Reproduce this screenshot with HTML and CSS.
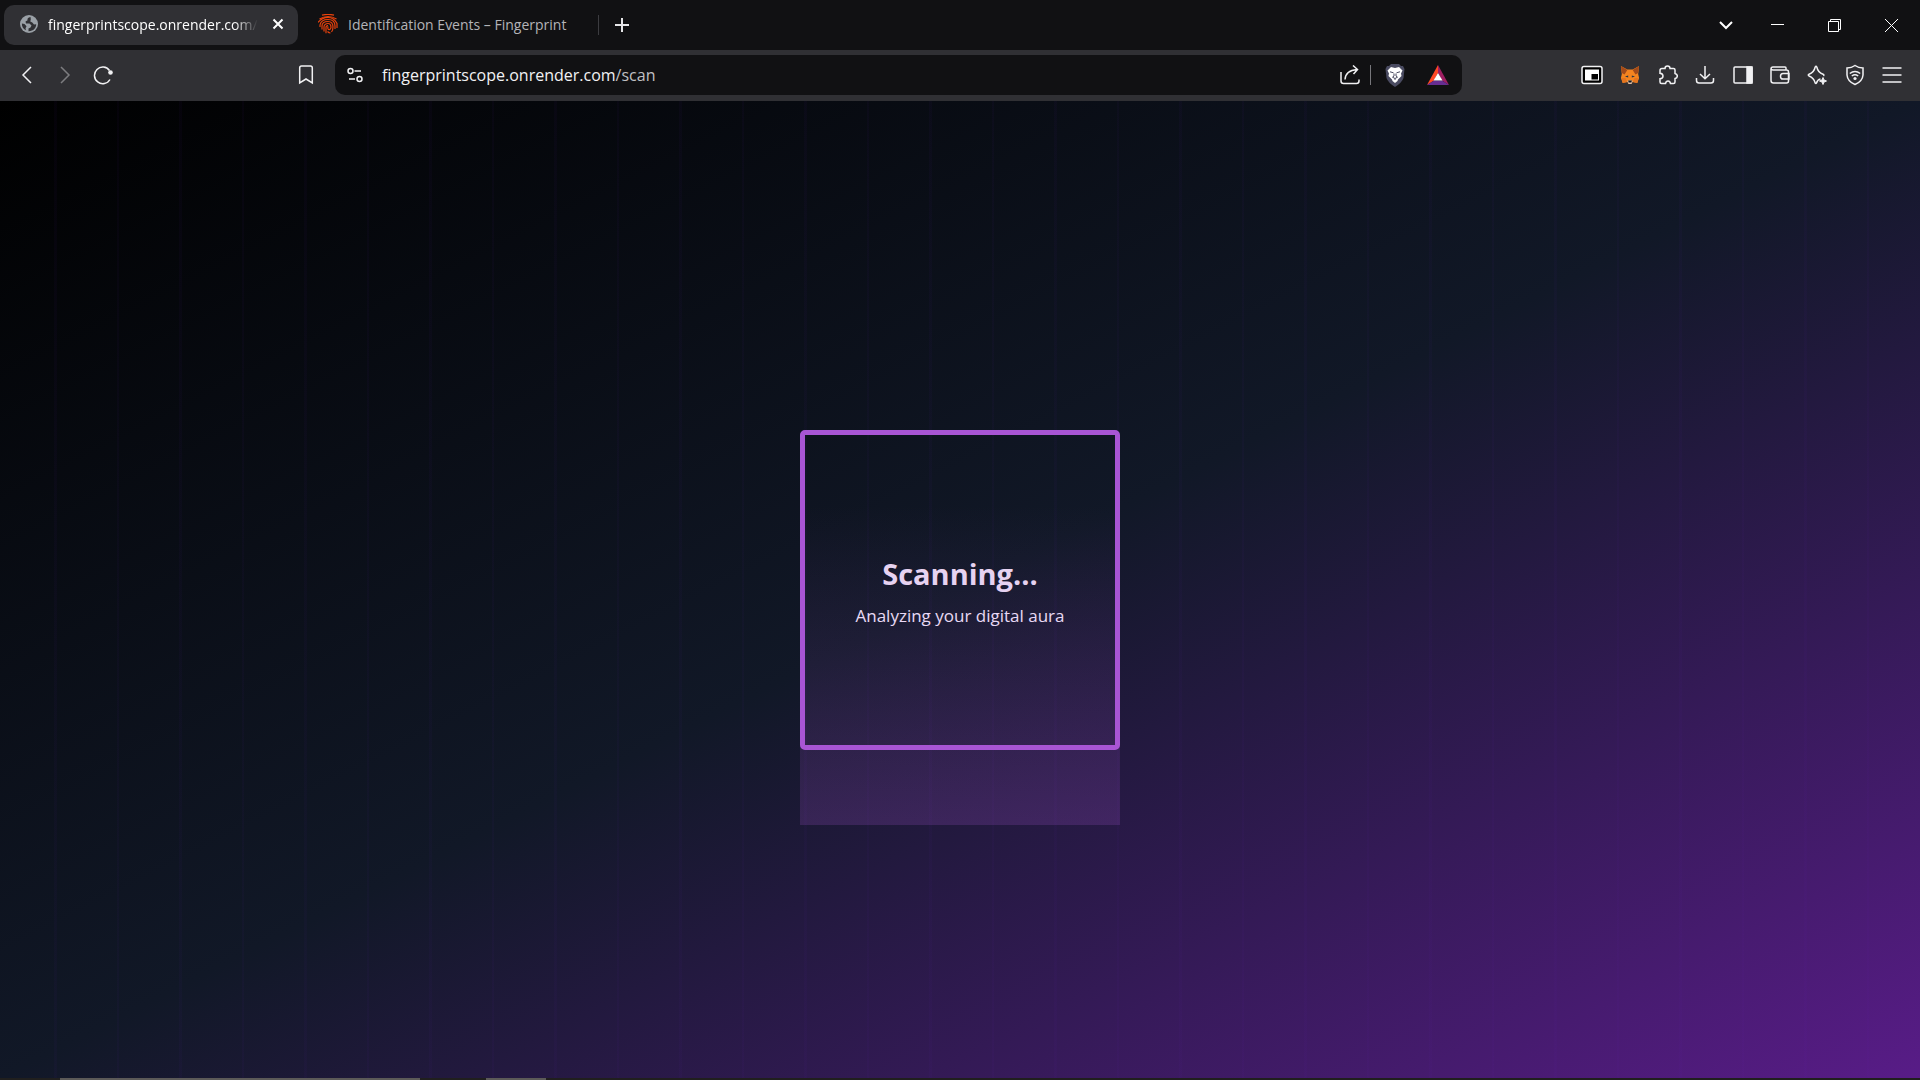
FILE: index.html
```
<!DOCTYPE html>
<html lang="en">

<head>
  <meta charset="UTF-8">
  <meta name="viewport" content="width=device-width, initial-scale=1.0">
  <title>Scan</title>
  <link rel="stylesheet" href="styles.css">
</head>

<body>
  <!-- tabs -->
  <header class="tabs">
    <div class="tab active">
      <svg width="18" height="18" viewBox="0 0 18 18">
        <circle cx="9" cy="9" r="9" fill="#9aa0a6" />
        <path d="M10.500 2C8 2.500 7 3.800 7.600 5.200L5.500 6.500 6 8.500H9.500L11.500 10.500 10.500 12.500 8.500 13.500V16.200C13.500 16.300 16.300 13 16.200 9.300L14 9.500 12.300 7.500 10.300 6.500 10.800 4.200ZM1.900 8.500L4.500 9 6.500 11.300 5.500 13.200 6 15.300C3.500 14.300 1.600 11.600 1.900 8.500Z" fill="#303034" />
      </svg>
      <a class="tab-title" href="#">fingerprintscope.onrender.com/</a>
      <button class="close" aria-label="Close tab">
        <svg width="12" height="12" viewBox="0 0 12 12"><path d="M1.500 1.500l9 9M10.500 1.500l-9 9" stroke="#fff" stroke-width="2" /></svg>
      </button>
    </div>
    <div class="tab">
      <svg width="20" height="20" viewBox="0 0 20 20" fill="none" stroke="#e8420c" stroke-width="1.200">
        <path d="M4 1.200Q10-.400 16 1.200M1.500 5Q10 0 18.500 5M0 8.500Q4 3.500 10 3.500T19 9.500V14M2 13V11Q3 5.500 10 5.500 17 5.500 17 12V15M4 15.500V12Q4 7.500 10 7.500 15 7.500 15 13 15 16 13.500 18M6 17.500V12.500Q6.500 9.500 10 9.500 13 9.500 13 13.500 12.500 16 10.500 15.500 9.500 15 10 12.500M8 19.300V13Q8.500 11.500 10 11.700M9.500 17.500Q11 19 12.500 19" />
      </svg>
      <a class="tab-title" href="#">Identification Events – Fingerprint</a>
    </div>
    <button class="new-tab" aria-label="New tab">
      <svg width="14" height="14" viewBox="0 0 14 14"><path d="M7 0v14M0 7h14" stroke="#e6e6e8" stroke-width="2" /></svg>
    </button>
    <div class="window-buttons">
      <button class="search-tabs" aria-label="Search tabs"><svg width="14" height="10" viewBox="0 0 14 10"><path d="M1 2l6 6 6-6" fill="none" stroke="#fff" stroke-width="2" /></svg></button>
      <button aria-label="Minimize"><svg width="13" height="13" viewBox="0 0 13 13"><path d="M0 5.500h13" stroke="#fff" /></svg></button>
      <button aria-label="Restore"><svg width="13" height="13" viewBox="0 0 13 13" fill="none" stroke="#fff"><path d="M.5 2.500h10v10h-10zM2.500 2.500v-2h10v10h-2" /></svg></button>
      <button aria-label="Close"><svg width="13" height="13" viewBox="0 0 13 13"><path d="M0 0l13 13M13 0L0 13" stroke="#fff" /></svg></button>
    </div>
  </header>

  <!-- toolbar -->
  <nav class="toolbar">
    <div class="nav-buttons">
      <button aria-label="Back"><svg width="20" height="20" viewBox="0 0 20 20"><path d="M14 2L6 10l8 8" /></svg></button>
      <button class="disabled" aria-label="Forward"><svg width="20" height="20" viewBox="0 0 20 20"><path d="M6 2l8 8-8 8" /></svg></button>
      <button aria-label="Reload"><svg width="20" height="20" viewBox="0 0 20 20"><path d="M16.500 5.500A8.300 8.300 0 1 0 17 14.500" /><circle cx="17.500" cy="7.500" r="2.300" fill="#f1f1f3" stroke="none" /></svg></button>
    </div>
    <button class="bookmark" aria-label="Bookmark"><svg width="20" height="20" viewBox="0 0 20 20"><path d="M3.700 3Q3.700 1 5.500 1H14.500Q16.300 1 16.300 3V18L10 14 3.700 18Z" /></svg></button>
    <div class="address">
      <button aria-label="Site settings"><svg width="16" height="16" viewBox="0 0 16 16"><circle cx="3.500" cy="4" r="2.500" /><path d="M7.500 4H14M2 12H8" /><circle cx="12.500" cy="12" r="2.500" /></svg></button>
      <a class="url" href="#">fingerprintscope.onrender.com<span>/scan</span></a>
      <button class="share" aria-label="Share"><svg width="20" height="20" viewBox="0 0 20 20"><path d="M1 7V16Q1 18.500 3.500 18.500H16.500Q19 18.500 19 16V14.500M5 14.500Q5.500 5.500 17 4.500M13 .500L17.500 4.500 13.500 9" /></svg></button>
      <button class="shield" aria-label="Brave Shields">
        <svg width="20" height="23" viewBox="0 0 20 23">
          <path d="M6 0H14L16 2H18L19.500 5 18.500 14Q17 18.500 10 23 3 18.500 1.500 14L.500 5 2 2H4Z" fill="#4a4b61" stroke="none" />
          <path d="M6 3L10 4 14 3 17.500 6.500 16 9.500 16.500 12 13 15.500 12.500 17 10 19 7.500 17 7 15.500 3.500 12 4 9.500 2.500 6.500Z" fill="#fff" stroke="none" />
          <path d="M5 7.800L8.500 8.800M15 7.800L11.500 8.800M9 9.500V12L7.500 13.200 10 14.500 12.500 13.200 11 12V9.500M10 14.500V16" stroke="#4a4b61" stroke-width="1" />
        </svg>
      </button>
      <button class="bat" aria-label="Brave Rewards">
        <svg width="22" height="20" viewBox="0 0 22 20">
          <g stroke="none"><path d="M11 0L0 20 7 15.500 11 8Z" fill="#ff4724" /><path d="M11 0L22 20 15 15.500 11 8Z" fill="#9e1f63" /><path d="M0 20H22L15 15.500H7Z" fill="#662d91" /><path d="M11 8L15.500 15.500H6.500Z" fill="#fff" /></g>
        </svg>
      </button>
    </div>
    <div class="extensions">
      <button aria-label="Picture in picture"><svg width="22" height="20" viewBox="0 0 22 20"><rect x="1" y="1.500" width="20" height="17" rx="2" fill="#000" /><path d="M4 4.500H18V15.500H4Z" fill="#fff" stroke="none" /><path d="M10.500 9H17V14.500H10.500Z" fill="#000" stroke="none" /></svg></button>
      <button aria-label="MetaMask">
        <svg width="20" height="20" viewBox="0 0 22 20" preserveAspectRatio="none">
          <g stroke="none"><path d="M1 1L8 4.500H14L21 1 20 9 21 13 19 18 14 17 12.500 19H9.500L8 17 3 18 1 13 2 9Z" fill="#f5841f" /><path d="M1 1L8 5 5 9.500 2 8ZM21 1L14 5 17 9.500 20 8Z" fill="#a34a1a" /><path d="M1.500 13H6L8 17 3 18ZM20.500 13H16L14 17 19 18Z" fill="#e4751f" /><path d="M5.500 11.500L9 10.500 9 12.500ZM16.500 11.500L13 10.500 13 12.500Z" fill="#233447" /><path d="M8 16L11 15 14 16 12.500 19H9.500Z" fill="#d7c1b3" /><path d="M9 15.500H13L12.500 17.500H9.500Z" fill="#161616" /></g>
        </svg>
      </button>
      <button aria-label="Extensions"><svg width="20" height="20" viewBox="0 0 20 20"><path d="M4 3.500H7Q7 1 9.500 1T12 3.500H15.500Q17 3.500 17 5V8.500Q19.300 9 19.300 11T17 13.500V17Q17 18.500 15.500 18.500H12.500Q12 16 10 16T7.500 18.500H3.500Q2 18.500 2 17V13.800Q5 13.500 5 11T2 8.200V5.500Q2 3.500 4 3.500Z" /></svg></button>
      <button aria-label="Downloads"><svg width="20" height="20" viewBox="0 0 20 20"><path d="M10 1V13.500M5 9L10 13.800 15 9M1.500 13V15.500Q1.500 18 4 18H16Q18.500 18 18.500 15.500V13" /></svg></button>
      <button aria-label="Sidebar"><svg width="20" height="20" viewBox="0 0 20 20"><rect x="1" y="2" width="18" height="16" rx="1" /><path d="M14 2H19V18H14Z" fill="#f1f1f3" /></svg></button>
      <button aria-label="Wallet"><svg width="20" height="20" viewBox="0 0 20 20"><path d="M16 5V3Q16 2 15 2H3Q1 2 1 4V15.500Q1 18 3.500 18H16.500Q18.500 18 18.500 16V7Q18.500 5 16.500 5H3Q1 5 1 3.500M19 8.500H13Q10.500 8.500 10.500 11.300T13 14H19Z" /></svg></button>
      <button aria-label="Leo AI"><svg width="20" height="20" viewBox="0 0 20 20"><path d="M13.500 14Q10.500 14.500 9.500 18 9 19 8.200 18 7 13 2 11 .500 10 2 9.200 7 7.500 8.200 2 9 .500 9.800 2 11 7.500 16 9.200 17.500 10 16.500 11" /><path d="M16 12.500L17 15 19.500 16 17 17 16 19.500 15 17 12.500 16 15 15Z" fill="#f1f1f3" stroke-width="1" /></svg></button>
      <button aria-label="VPN"><svg width="20" height="22" viewBox="0 0 20 22"><path d="M10 1.500Q13.500 4 18 4V11Q17.500 17.500 10 20.500 2.500 17.500 2 11V4Q6.500 4 10 1.500ZM4.800 9.500Q10 5.500 15.200 9.500M6.800 12Q10 9.500 13.200 12" /><circle cx="10" cy="14.500" r="1.600" fill="#f1f1f3" stroke="none" /></svg></button>
      <button aria-label="Menu"><svg width="20" height="20" viewBox="0 0 20 20"><path d="M.500 3H19.500M.500 10H19.500M.500 17H19.500" /></svg></button>
    </div>
  </nav>

  <!-- page -->
  <main class="page">
    <div class="scanner">
      <div class="beam"></div>
      <h1>Scanning...</h1>
      <p>Analyzing your digital aura</p>
    </div>
  </main>

  <footer class="taskbar">
    <div class="task"></div>
    <div class="task small"></div>
  </footer>
</body>

</html>
```
FILE: styles.css
```
* {
  box-sizing: border-box;
}

body {
  margin: 0;
  height: 100vh;
  display: flex;
  flex-direction: column;
  overflow: hidden;
  background: #111113;
  color: #f1f1f3;
  font-family: "Open Sans", "Noto Sans", sans-serif;
}

button {
  display: flex;
  align-items: center;
  justify-content: center;
  padding: 0;
  border: 0;
  background: none;
  cursor: pointer;
}

a {
  color: inherit;
  text-decoration: none;
}

svg {
  flex: none;
}

/* tabs start */
.tabs {
  display: flex;
  align-items: center;
  height: 50px;
  padding-left: 4px;
}

.tab {
  display: flex;
  align-items: center;
  gap: 10px;
  height: 40px;
  padding: 0 16px 2px 20px;
  color: #b4b4b8;
  font-size: 14px;
}

.tab.active {
  width: 294px;
  padding: 0 10px 2px 16px;
  border-radius: 10px;
  background: #303034;
  color: #fff;
}

.tab.active .tab-title {
  flex: 1;
  -webkit-mask-image: linear-gradient(to left, transparent, #000 24px);
  mask-image: linear-gradient(to left, transparent, #000 24px);
}

.tab-title {
  white-space: nowrap;
}

.close {
  width: 20px;
  height: 20px;
}

.new-tab {
  height: 20px;
  margin-left: 16px;
  padding-left: 16px;
  border-left: 1px solid #3c3c40;
}

.window-buttons {
  display: flex;
  margin-left: auto;
}

.window-buttons button {
  width: 57px;
  height: 50px;
}

.window-buttons .search-tabs {
  width: 46px;
}
/* tabs end */

/* toolbar start */
.toolbar {
  display: flex;
  align-items: center;
  height: 51px;
  padding: 0 18px 1px 16px;
  background: #303034;
}

.toolbar svg {
  fill: none;
  stroke: #f1f1f3;
  stroke-width: 1.5;
}

.nav-buttons {
  display: flex;
  gap: 16px;
}

.nav-buttons button {
  width: 22px;
}

.nav-buttons .disabled {
  opacity: 0.4;
}

.bookmark {
  margin-left: 182px;
}

.address {
  display: flex;
  align-items: center;
  flex: 1;
  height: 40px;
  margin: 0 119px 0 19px;
  padding: 0 13px 0 12px;
  border-radius: 10px;
  background: #111113;
}

.url {
  flex: 1;
  margin-left: 19px;
  font-size: 16px;
}

.url span {
  color: #c0c0c4;
}

.share {
  padding-right: 10px;
  border-right: 1px solid #77777b;
}

.shield {
  margin: 0 22px 0 14px;
}

.extensions {
  display: flex;
  justify-content: space-between;
  width: 321px;
}
/* toolbar end */

/* page start */
.page {
  display: flex;
  flex: 1;
  align-items: center;
  justify-content: center;
  background:
    repeating-linear-gradient(to right, transparent 0 54px, rgba(100, 30, 190, 0.04) 54px 57px, transparent 57px 117px, rgba(100, 30, 190, 0.04) 117px 119px, transparent 119px 125px),
    linear-gradient(to bottom right, #000, #111827, #581c87);
}

.scanner {
  position: relative;
  display: flex;
  flex-direction: column;
  align-items: center;
  justify-content: center;
  width: 320px;
  height: 320px;
  padding-top: 4px;
  border: 5px solid #a855d4;
  border-radius: 5px;
}

/* sweeping light, caught on its way down */
.beam {
  position: absolute;
  top: 70px;
  left: -5px;
  width: 320px;
  height: 320px;
  background: linear-gradient(to bottom, transparent, rgba(168, 85, 212, 0.2));
}

.scanner h1 {
  margin: 0;
  color: #e9d8f2;
  font-size: 29px;
  line-height: 40px;
}

.scanner p {
  margin: 8px 0 0;
  color: #eee2f8;
  font-size: 17px;
  line-height: 28px;
}
/* page end */

/* taskbar start */
.taskbar {
  display: flex;
  gap: 66px;
  height: 2px;
  padding-left: 60px;
  background: #201f1e;
}

.task {
  width: 360px;
  background: #5c5a58;
}

.task.small {
  width: 60px;
}
/* taskbar end */
```
